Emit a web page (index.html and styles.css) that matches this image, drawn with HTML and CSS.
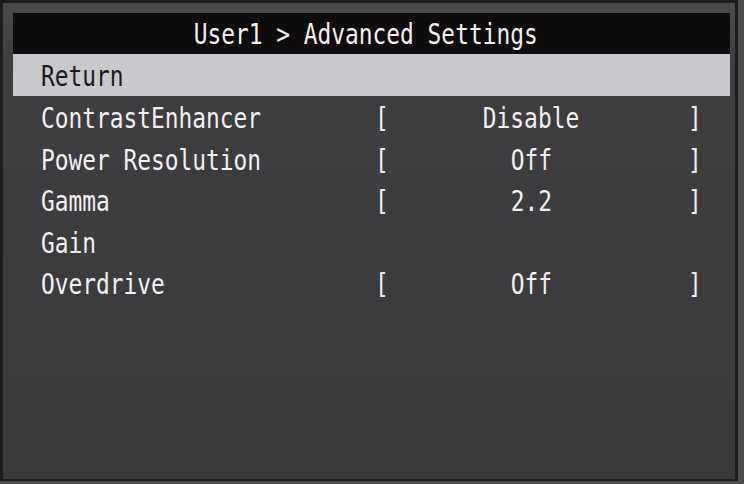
FILE: index.html
```html
<!DOCTYPE html>
<html lang="en">
    <head>
        <meta charset="utf-8">
        <title>User1 &gt; Advanced Settings</title>
        <link rel="stylesheet" href="styles.css">
    </head>
    <body>
        <div class="monitor">
            <div class="osd">
                <div class="osd-title"><span class="txt">User1 &gt; Advanced Settings</span></div>

                <div class="row selected">
                    <div class="label"><span class="txt">Return</span></div>
                </div>

                <div class="row">
                    <div class="label"><span class="txt">ContrastEnhancer</span></div>
                    <div class="bracket"><span class="txt">[</span></div>
                    <div class="value"><span class="txt">Disable</span></div>
                    <div class="bracket close"><span class="txt">]</span></div>
                </div>

                <div class="row">
                    <div class="label"><span class="txt">Power Resolution</span></div>
                    <div class="bracket"><span class="txt">[</span></div>
                    <div class="value"><span class="txt">Off</span></div>
                    <div class="bracket close"><span class="txt">]</span></div>
                </div>

                <div class="row">
                    <div class="label"><span class="txt">Gamma</span></div>
                    <div class="bracket"><span class="txt">[</span></div>
                    <div class="value"><span class="txt">2.2</span></div>
                    <div class="bracket close"><span class="txt">]</span></div>
                </div>

                <div class="row">
                    <div class="label"><span class="txt">Gain</span></div>
                </div>

                <div class="row">
                    <div class="label"><span class="txt">Overdrive</span></div>
                    <div class="bracket"><span class="txt">[</span></div>
                    <div class="value"><span class="txt">Off</span></div>
                    <div class="bracket close"><span class="txt">]</span></div>
                </div>
            </div>
        </div>
    </body>
</html>
```

FILE: styles.css
```css
body {
    margin: 0;
    padding: 0;
    background: #4b4a4d;
    font-family: "DejaVu Sans Mono", monospace;
    font-size: 28px;
    color: #f2f0f2;
}

.monitor {
    box-sizing: border-box;
    width: 738px;
    height: 481px;
    border: 3px solid #1e1c1d;
    border-bottom-width: 2px;
    background: linear-gradient(#4a494c 0, #3e3d40 60px, #3a393c 100%);
}

.osd {
    margin: 10px 5px 0 10px;
}

.osd-title {
    box-sizing: border-box;
    height: 41px;
    padding: 3px 12px 0 0;
    line-height: 38px;
    text-align: center;
    background: #0e0c0d;
}

.txt {
    display: inline-block;
    white-space: pre;
    transform: scaleX(0.816);
    transform-origin: left center;
}

.osd-title .txt,
.value .txt {
    transform-origin: center center;
}

.row {
    box-sizing: border-box;
    display: grid;
    grid-template-columns: 362px 17px 279px 1fr;
    align-items: center;
    height: 41.5px;
    padding-top: 4px;
    line-height: 37.5px;
}

.row.selected {
    height: 42px;
    background: #c9c8cc;
    color: #1b1a1c;
}

.label {
    padding-left: 28px;
}

.value {
    text-align: center;
}

.bracket.close {
    padding-left: 17px;
}
```
